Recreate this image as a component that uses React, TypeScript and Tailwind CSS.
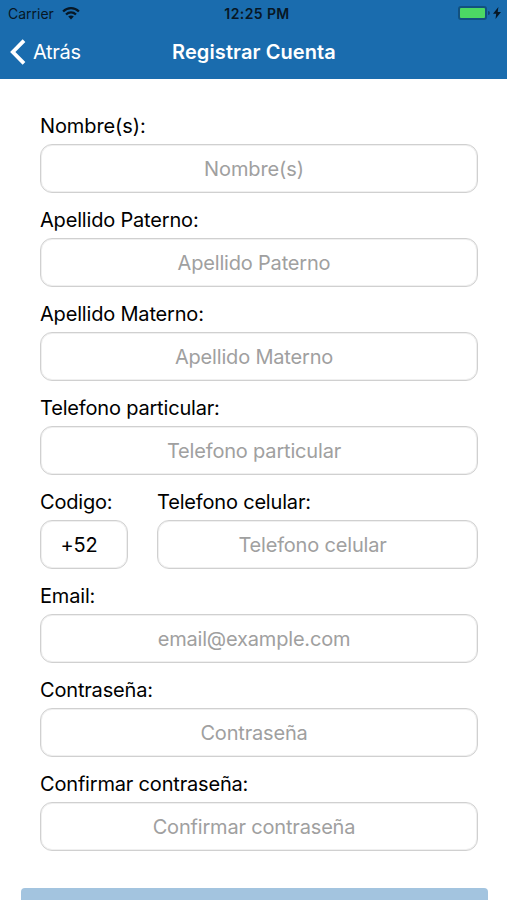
type FieldProps = {
  label: string;
  placeholder?: string;
  value?: string;
  className?: string;
  tracking?: string;
};

function Field({ label, placeholder, value, className = "", tracking = "tracking-[-0.18px]" }: FieldProps) {
  return (
    <label className={`block h-[94px] min-w-0 ${className}`}>
      <span className={`block h-[31px] text-[20px] leading-[26px] whitespace-nowrap text-black ${tracking}`}>
        {label}
      </span>
      <input
        type="text"
        placeholder={placeholder}
        defaultValue={value}
        className={`block h-[49px] w-full rounded-[12px] border border-[#d0d0d0] bg-white pr-[10px] text-center text-[20px] text-black inset-ring-1 inset-ring-[#f0f0f0] outline-none placeholder:text-[#a0a0a0] ${tracking}`}
      />
    </label>
  );
}

function StatusBar() {
  return (
    <div className="grid h-7 grid-cols-3 items-center pr-[6px] pb-[2px] pl-[8px] text-[14px] text-[#071725]">
      <div className="flex items-center gap-[8px]">
        <span>Carrier</span>
        <svg width="18" height="13" viewBox="0 0 18 13" fill="none" stroke="currentColor" strokeWidth="2.3">
          <path d="M1.1 4.5C5.6.1 12.4.1 16.9 4.5" />
          <path d="M4 7.5c2.9-2.7 7.1-2.7 10 0" />
          <path d="M9 12.4 6.2 9.6c1.6-1.5 4-1.5 5.6 0Z" fill="currentColor" stroke="none" />
        </svg>
      </div>
      <span className="pl-[5px] text-center font-semibold tracking-[0.4px] whitespace-nowrap">12:25 PM</span>
      <div className="flex items-center justify-end">
        <span className="h-[14px] w-[29px] rounded-[3px] border-2 border-[#12517f] bg-[#4cd964]" />
        <span className="ml-[1px] h-[4px] w-[2px] rounded-r-full bg-[#12466f]" />
        <svg className="ml-[3px]" width="8" height="12" viewBox="0 0 8 12" fill="currentColor">
          <path d="M5.4 0 0 6.7h3.2L2.5 12 8 5H4.7Z" />
        </svg>
      </div>
    </div>
  );
}

export default function App() {
  return (
    <div className="h-[900px] w-[507px] overflow-hidden bg-white font-['Inter',sans-serif]">
      <header className="h-[79px] bg-[#1a6cae]">
        <StatusBar />
        <nav className="grid h-[47px] grid-cols-[1fr_auto_1fr] items-center text-[20px] text-white">
          <button className="flex items-center gap-[7px] pl-[10px]">
            <svg width="16" height="26" viewBox="0 0 16 26" fill="none" stroke="currentColor" strokeWidth="3.8">
              <path d="M14 1.7 2.8 13 14 24.3" />
            </svg>
            <span className="tracking-[-0.3px]">Atrás</span>
          </button>
          <h1 className="pl-[1px] font-semibold tracking-[0.1px]">Registrar Cuenta</h1>
        </nav>
      </header>
      <main>
        <form className="pt-[34px] pr-[29px] pl-10">
          <Field label="Nombre(s):" placeholder="Nombre(s)" tracking="tracking-[-0.1px]" />
          <Field label="Apellido Paterno:" placeholder="Apellido Paterno" />
          <Field label="Apellido Materno:" placeholder="Apellido Materno" />
          <Field label="Telefono particular:" placeholder="Telefono particular" />
          <div className="flex gap-[29px]">
            <Field className="w-[88px] shrink-0" label="Codigo:" value="+52" />
            <Field className="flex-1" label="Telefono celular:" placeholder="Telefono celular" />
          </div>
          <Field label="Email:" placeholder="email@example.com" />
          <Field label="Contraseña:" placeholder="Contraseña" />
          <Field label="Confirmar contraseña:" placeholder="Confirmar contraseña" />
        </form>
        <div className="mt-[23px] mr-[19.5px] ml-[20.5px] h-[58px] rounded-[4px] bg-[#a3c4df]" />
      </main>
    </div>
  );
}
